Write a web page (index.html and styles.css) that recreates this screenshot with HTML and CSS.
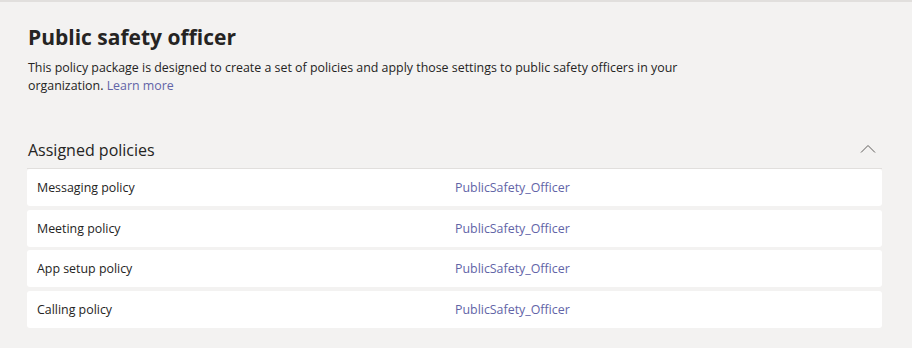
FILE: index.html
```html
<!DOCTYPE html>
<html>
  <head>
    <title>Public safety officer</title>
    <link rel="stylesheet" href="styles.css">
  </head>

  <body>
    <div class="page">
      <div class="package-header">
        <h1>Public safety officer</h1>
        <p class="description">
          This policy package is designed to create a set of policies and apply those settings to public safety officers in your
          organization. <a href="#" class="link">Learn more</a>
        </p>
      </div>

      <div class="section">
        <div class="section-header">
          <h2>Assigned policies</h2>
          <button class="collapse-button" aria-label="Collapse">
            <svg width="16" height="16" viewBox="0 0 16 16">
              <path d="M1 11.5 L8 4.5 L15 11.5" fill="none" stroke="#605e5c" stroke-width="1" />
            </svg>
          </button>
        </div>

        <div class="policy-list">
          <div class="policy-row">
            <span class="policy-type">Messaging policy</span>
            <span class="policy-name">PublicSafety_Officer</span>
          </div>
          <div class="policy-row">
            <span class="policy-type">Meeting policy</span>
            <span class="policy-name">PublicSafety_Officer</span>
          </div>
          <div class="policy-row">
            <span class="policy-type">App setup policy</span>
            <span class="policy-name">PublicSafety_Officer</span>
          </div>
          <div class="policy-row">
            <span class="policy-type">Calling policy</span>
            <span class="policy-name">PublicSafety_Officer</span>
          </div>
        </div>
      </div>
    </div>
  </body>
</html>
```

FILE: styles.css
```css
body {
  font-family: "Open Sans", "Noto Sans", sans-serif;
  background-color: #f3f2f1;
  color: #252423;
  margin: 0;
  border-top: 2px solid #e1dfdd;
}

.page {
  padding: 20px 30px 0 27px;
}

.package-header {
  padding-left: 1px;
}

h1 {
  font-size: 21px;
  font-weight: 700;
  margin: 0;
  line-height: 30px;
}

.description {
  font-size: 12.4px;
  line-height: 18px;
  margin: 7px 0 0 0;
  max-width: 680px;
}

.link {
  color: #6264a7;
  text-decoration: none;
}

.section {
  margin-top: 39px;
}

.section-header {
  display: flex;
  justify-content: space-between;
  align-items: center;
  height: 34px;
  padding-left: 1px;
  border-bottom: 1px solid #e1dfdd;
}

h2 {
  font-size: 16px;
  font-weight: 400;
  margin: 0 0 2px 0;
}

.collapse-button {
  background: none;
  border: none;
  padding: 0;
  margin: 0 6px 4px 0;
  cursor: pointer;
  display: flex;
}

.policy-list {
  display: flex;
  flex-direction: column;
  gap: 3.5px;
}

.policy-row {
  display: flex;
  align-items: center;
  height: 37px;
  background: white;
  border-radius: 3px;
  font-size: 12.4px;
  padding-left: 10px;
}

.policy-type {
  width: 418px;
}

.policy-name {
  color: #6264a7;
}
```
